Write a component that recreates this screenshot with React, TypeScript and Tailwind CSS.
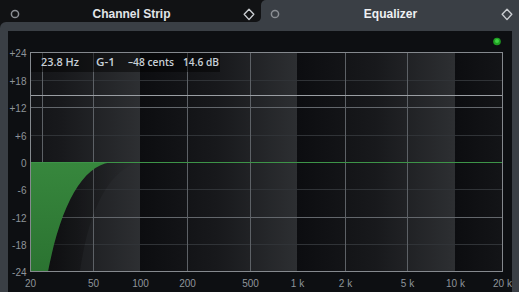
import React from "react";

const GRAPH = { left: 30, right: 502, top: 52, bottom: 271, zero: 162 };

// log scale, 20 Hz .. 20 kHz over the graph width
const fx = (f: number) =>
  Math.round(GRAPH.left + ((GRAPH.right - GRAPH.left) * Math.log10(f / 20)) / 3);
const dy = (db: number) => Math.round(GRAPH.zero - db * 4.5625 - 0.01);

const dbLabels = [
  { db: 24, text: "+24" },
  { db: 18, text: "+18" },
  { db: 12, text: "+12" },
  { db: 6, text: "+6" },
  { db: 0, text: "0" },
  { db: -6, text: "-6" },
  { db: -12, text: "-12" },
  { db: -18, text: "-18" },
  { db: -24, text: "-24" },
];

const freqLabels = [
  { f: 20, text: "20" },
  { f: 50, text: "50" },
  { f: 100, text: "100" },
  { f: 200, text: "200" },
  { f: 500, text: "500" },
  { f: 1000, text: "1 k" },
  { f: 2000, text: "2 k" },
  { f: 5000, text: "5 k" },
  { f: 10000, text: "10 k" },
  { f: 20000, text: "20 k" },
];

const readout = [
  { x: 41, w: 38, text: "23.8 Hz" },
  { x: 96, w: 19, text: "G-1" },
  { x: 128, w: 46, text: "–48 cents" },
  { x: 183, w: 36, text: "14.6 dB" },
];

// frequencies that get a vertical grid line (decades are shown by the shading)
const gridFreqs = [23.8, 50, 200, 500, 2000, 5000];

// decade bands: 10-100, 100-1k, 1k-10k, 10k-100k
const decades = [10, 100, 1000, 10000];

const CircleIcon = () => (
  <svg width="10" height="10" viewBox="0 0 10 10">
    <circle cx="5" cy="5" r="3.6" fill="none" stroke="#8b8f94" strokeWidth="1.5" />
  </svg>
);

const DiamondIcon = () => (
  <svg width="12" height="13" viewBox="0 0 12 13">
    <path
      d="M6 1.2 L10.8 6.3 L6 11.6 L1.2 6.3 Z"
      fill="none"
      stroke="#c9ccd0"
      strokeWidth="1.4"
      strokeLinejoin="round"
    />
  </svg>
);

const EqGraph = () => {
  const decadeW = (GRAPH.right - GRAPH.left) / 3;
  return (
    <svg width="504" height="261" viewBox="8 31 504 261" className="block">
      <defs>
        {decades.map((d) => {
          const x1 = GRAPH.left + decadeW * Math.log10(d / 20);
          return (
            <linearGradient
              key={d}
              id={`dec${d}`}
              gradientUnits="userSpaceOnUse"
              x1={x1}
              y1="0"
              x2={x1 + decadeW}
              y2="0"
            >
              <stop offset="0" stopColor="#0c0d10" />
              <stop offset="0.5" stopColor="#18191c" />
              <stop offset="1" stopColor="#2d2f32" />
            </linearGradient>
          );
        })}
        <linearGradient id="greenFill" x1="0" y1="0" x2="0" y2="1">
          <stop offset="0" stopColor="#37873d" />
          <stop offset="1" stopColor="#2b7331" />
        </linearGradient>
        <linearGradient id="curveShade" x1="0" y1="0" x2="1" y2="0">
          <stop offset="0" stopColor="#000000" stopOpacity="0.35" />
          <stop offset="1" stopColor="#000000" stopOpacity="0" />
        </linearGradient>
      </defs>

      {/* decade shading */}
      {decades.map((d) => {
        const a = Math.max(GRAPH.left, fx(d));
        const b = Math.min(GRAPH.right, fx(d * 10));
        return (
          <rect
            key={d}
            x={a}
            y={GRAPH.top}
            width={b - a}
            height={GRAPH.bottom - GRAPH.top}
            fill={`url(#dec${d})`}
          />
        );
      })}

      {/* horizontal grid */}
      {[18, 6, -6, -18].map((db) => (
        <line
          key={db}
          x1={GRAPH.left}
          x2={GRAPH.right}
          y1={dy(db) + 0.5}
          y2={dy(db) + 0.5}
          stroke="#303337"
        />
      ))}
      {[12, -12].map((db) => (
        <line
          key={db}
          x1={GRAPH.left}
          x2={GRAPH.right}
          y1={dy(db) + 0.5}
          y2={dy(db) + 0.5}
          stroke="#63676c"
        />
      ))}

      {/* vertical grid */}
      {gridFreqs.map((f) => (
        <line
          key={f}
          x1={fx(f) + 0.5}
          x2={fx(f) + 0.5}
          y1={GRAPH.top}
          y2={GRAPH.bottom}
          stroke="#5d6166"
        />
      ))}

      {/* gain marker 14.6 dB */}
      <line x1={GRAPH.left} x2={GRAPH.right} y1={95.5} y2={95.5} stroke="#9a9ea3" />

      {/* shade right of the slope */}
      <path
        d={`M115 ${GRAPH.zero} C85 ${GRAPH.zero} 62 200 48 ${GRAPH.bottom} L80 ${GRAPH.bottom} C90 205 110 ${GRAPH.zero + 8} 140 ${GRAPH.zero} Z`}
        fill="url(#curveShade)"
      />

      {/* high pass curve */}
      <path
        d={`M${GRAPH.left} ${GRAPH.zero} L115 ${GRAPH.zero} C85 ${GRAPH.zero} 62 200 48 ${GRAPH.bottom + 0.5} L${GRAPH.left} ${GRAPH.bottom + 0.5} Z`}
        fill="url(#greenFill)"
      />
      <line
        x1={GRAPH.left}
        x2={GRAPH.right}
        y1={GRAPH.zero + 0.5}
        y2={GRAPH.zero + 0.5}
        stroke="#3d9448"
      />

      {/* frame */}
      <rect
        x={GRAPH.left + 0.5}
        y={GRAPH.top + 0.5}
        width={GRAPH.right - GRAPH.left}
        height={GRAPH.bottom - GRAPH.top}
        fill="none"
        stroke="#85898e"
      />

      {/* readout */}
      <rect x={31} y={53} width={189} height={19} fill="#000000" fillOpacity="0.45" />
      <g className="font-['Open_Sans',Arial,sans-serif] text-[11.5px] font-semibold fill-[#c8d0d8]">
        {readout.map((r) => (
          <text key={r.text} x={r.x} y={66} textLength={r.w} lengthAdjust="spacingAndGlyphs">
            {r.text}
          </text>
        ))}
      </g>

      {/* axis labels */}
      <g className="font-['Liberation_Sans',Arial,sans-serif] text-[10px] fill-[#8e949a]">
        {dbLabels.map((l) => (
          <text key={l.text} x={26.5} y={dy(l.db) + 5} textAnchor="end">
            {l.text}
          </text>
        ))}
        {freqLabels.map((l) => (
          <text key={l.text} x={fx(l.f) + 0.5} y={287} textAnchor="middle">
            {l.text}
          </text>
        ))}
      </g>

      {/* status led */}
      <circle cx={497} cy={41.5} r={3.8} fill="#1f9e22" />
      <circle cx={497} cy={41} r={2} fill="#3fd043" />
    </svg>
  );
};

export default function App() {
  return (
    <div className="w-[519px] h-[292px] bg-[#111214] flex flex-col overflow-hidden font-['Liberation_Sans',Arial,sans-serif]">
      <div className="flex h-[22px]">
        <div className="w-[261px] bg-[#3a3f45]">
          <div className="h-full bg-[#111214] rounded-br-[5px] flex items-center pt-[6px] pl-[10px] pr-[6px]">
            <CircleIcon />
            <span className="flex-1 text-center text-[12px] leading-[14px] font-bold text-[#e2e5e8]">
              Channel Strip
            </span>
            <DiamondIcon />
          </div>
        </div>
        <div className="flex-1 bg-[#3a3f45] rounded-tl-[5px] flex items-center pt-[6px] pl-[9px] pr-[6px]">
          <CircleIcon />
          <span className="flex-1 text-center text-[12px] leading-[14px] font-bold text-[#eef0f2]">
            Equalizer
          </span>
          <DiamondIcon />
        </div>
      </div>
      <div className="flex-1 bg-[#3a3f45] rounded-tl-[6px] pt-[9px] pl-[8px] pr-[7px] flex">
        <div className="flex-1 bg-[#0d0f12]">
          <EqGraph />
        </div>
      </div>
    </div>
  );
}
